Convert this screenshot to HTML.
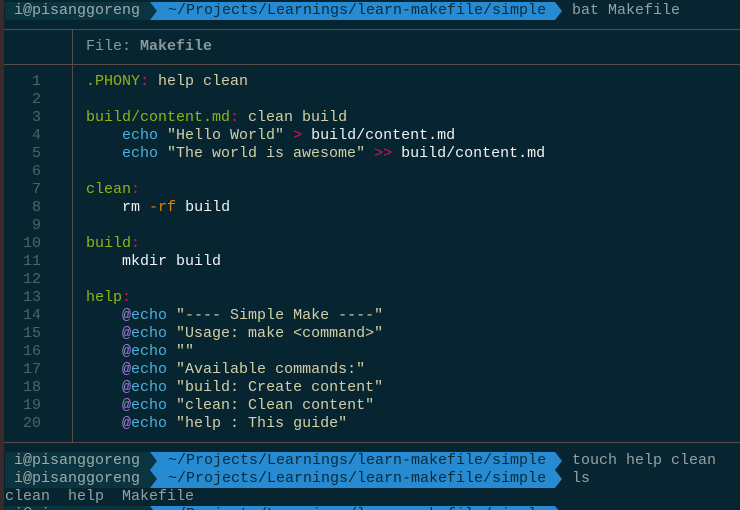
<!DOCTYPE html>
<html><head><style>
html,body{margin:0;padding:0;width:740px;height:510px;overflow:hidden;}
body{background:#062530;position:relative;font-family:"Liberation Mono",monospace;font-size:15px;}
#w{position:absolute;left:0;top:2px;width:740px;height:510px;}
.edge{position:absolute;left:0;top:0;width:4px;height:510px;background:#3a2a2c;}
.row{position:absolute;left:5px;height:18px;line-height:18px;white-space:pre;}
.host{position:absolute;left:5px;width:145px;height:18px;background:#0a3440;color:#a0aaaa;line-height:18px;white-space:pre;}
.path{position:absolute;left:150px;width:405px;height:18px;background:#268bd2;color:#0b2b36;line-height:18px;white-space:pre;}
.path:before{content:"";position:absolute;left:0;top:0;border-left:7px solid #0a3440;border-top:9px solid transparent;border-bottom:9px solid transparent;}
.path:after{content:"";position:absolute;right:-7px;top:0;border-left:7px solid #268bd2;border-top:9px solid transparent;border-bottom:9px solid transparent;}
.cmd{position:absolute;left:572px;height:18px;line-height:18px;color:#93a1a1;white-space:pre;}
.hl{position:absolute;left:4px;right:0;height:1px;background:#5a4b4b;}
.vl{position:absolute;left:72px;width:1px;background:#5a4b4b;}
.ln{position:absolute;left:0;width:41px;text-align:right;color:#4f6366;height:18px;line-height:18px;}
.code{position:absolute;left:86px;height:18px;line-height:18px;color:#d3cfa6;white-space:pre;}
.g{color:#8fb317}.p{color:#e0105f}.b{color:#4ab0e0}.w{color:#f2f2f2}.o{color:#e07f10}.v{color:#a779e0}
</style></head><body>
<div class="edge"></div>
<div id="w">
<div class="host" style="top:0px"> i@pisanggoreng</div>
<div class="path" style="top:0px">  ~/Projects/Learnings/learn-makefile/simple</div>
<div class="cmd" style="top:0px">bat Makefile</div>
<div class="hl" style="top:27px"></div>
<div class="vl" style="top:27px;height:413px"></div>
<div class="code" style="top:36px;color:#8a9a9a">File: <b>Makefile</b></div>
<div class="hl" style="top:62px"></div>

<div class="ln" style="top:71px">1</div><div class="code" style="top:71px"><span class="g">.PHONY</span><span class="p">:</span> help clean</div>
<div class="ln" style="top:89px">2</div>
<div class="ln" style="top:107px">3</div><div class="code" style="top:107px"><span class="g">build/content.md</span><span class="p">:</span> clean build</div>
<div class="ln" style="top:125px">4</div><div class="code" style="top:125px">    <span class="b">echo</span> "Hello World" <span class="p">&gt;</span> <span class="w">build/content.md</span></div>
<div class="ln" style="top:143px">5</div><div class="code" style="top:143px">    <span class="b">echo</span> "The world is awesome" <span class="p">&gt;&gt;</span> <span class="w">build/content.md</span></div>
<div class="ln" style="top:161px">6</div>
<div class="ln" style="top:179px">7</div><div class="code" style="top:179px"><span class="g">clean</span><span class="p">:</span></div>
<div class="ln" style="top:197px">8</div><div class="code" style="top:197px">    <span class="w">rm</span> <span class="o">-rf</span> <span class="w">build</span></div>
<div class="ln" style="top:215px">9</div>
<div class="ln" style="top:233px">10</div><div class="code" style="top:233px"><span class="g">build</span><span class="p">:</span></div>
<div class="ln" style="top:251px">11</div><div class="code" style="top:251px">    <span class="w">mkdir build</span></div>
<div class="ln" style="top:269px">12</div>
<div class="ln" style="top:287px">13</div><div class="code" style="top:287px"><span class="g">help</span><span class="p">:</span></div>
<div class="ln" style="top:305px">14</div><div class="code" style="top:305px">    <span class="v">@</span><span class="b">echo</span> "---- Simple Make ----"</div>
<div class="ln" style="top:323px">15</div><div class="code" style="top:323px">    <span class="v">@</span><span class="b">echo</span> "Usage: make &lt;command&gt;"</div>
<div class="ln" style="top:341px">16</div><div class="code" style="top:341px">    <span class="v">@</span><span class="b">echo</span> ""</div>
<div class="ln" style="top:359px">17</div><div class="code" style="top:359px">    <span class="v">@</span><span class="b">echo</span> "Available commands:"</div>
<div class="ln" style="top:377px">18</div><div class="code" style="top:377px">    <span class="v">@</span><span class="b">echo</span> "build: Create content"</div>
<div class="ln" style="top:395px">19</div><div class="code" style="top:395px">    <span class="v">@</span><span class="b">echo</span> "clean: Clean content"</div>
<div class="ln" style="top:413px">20</div><div class="code" style="top:413px">    <span class="v">@</span><span class="b">echo</span> "help : This guide"</div>
<div class="hl" style="top:440px"></div>

<div class="host" style="top:450px"> i@pisanggoreng</div>
<div class="path" style="top:450px">  ~/Projects/Learnings/learn-makefile/simple</div>
<div class="cmd" style="top:450px">touch help clean</div>
<div class="host" style="top:468px"> i@pisanggoreng</div>
<div class="path" style="top:468px">  ~/Projects/Learnings/learn-makefile/simple</div>
<div class="cmd" style="top:468px">ls</div>
<div class="row" style="top:486px;color:#93a1a1">clean  help  Makefile</div>
<div class="host" style="top:504px"> i@pisanggoreng</div>
<div class="path" style="top:504px">  ~/Projects/Learnings/learn-makefile/simple</div>
</div>
</body></html>
